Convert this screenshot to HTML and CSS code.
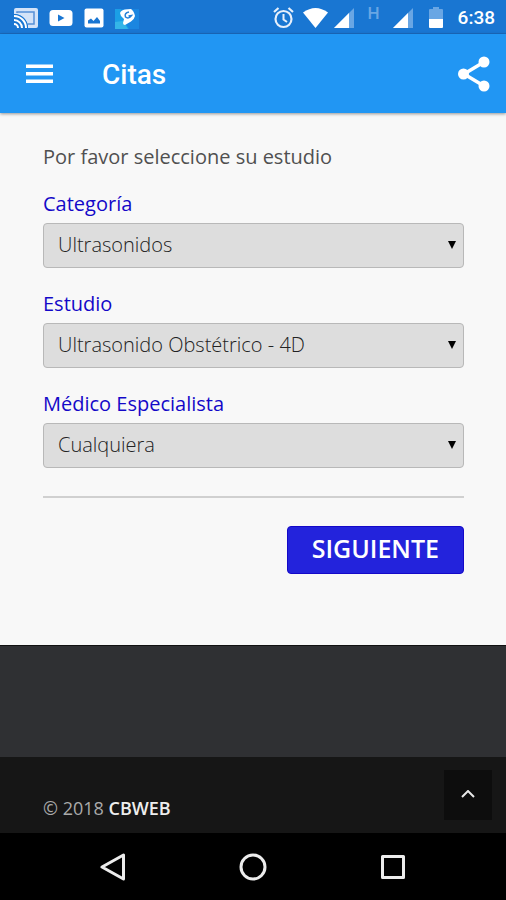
FILE: index.html
```html
<!DOCTYPE html>
<html lang="es">
<head>
<meta charset="utf-8">
<meta name="viewport" content="width=device-width, initial-scale=1">
<title>Citas</title>
<link rel="stylesheet" href="styles.css">
</head>
<body>
<div class="status">
  <div class="status-left">
    <svg width="24" height="20" viewBox="0 0 24 20" aria-hidden="true">
      <path d="M2 0h20q2 0 2 2v16q0 2-2 2h-8A14 14 0 0 0 0 6V2Q0 0 2 0z" fill="#d3e3f8"/>
      <path d="M3 5V4h17v12h-6" fill="none" stroke="#5590d6" stroke-width="1.5"/>
      <path d="M0 8a12 12 0 0 1 12 12M0 12a8 8 0 0 1 8 8" fill="none" stroke="#1976d2" stroke-width="4"/>
      <path d="M0 8a12 12 0 0 1 12 12M0 12a8 8 0 0 1 8 8M0 16a4 4 0 0 1 4 4" fill="none" stroke="#fff" stroke-width="2"/>
    </svg>
    <svg width="24" height="18" viewBox="0 0 24 18" aria-hidden="true">
      <rect x="0.500" y="1" width="23" height="16" rx="3.500" fill="#fff"/>
      <path d="M9 5.500l6.500 3.500-6.500 3.500z" fill="#1976d2"/>
    </svg>
    <svg width="20" height="20" viewBox="0 0 20 20" aria-hidden="true">
      <rect x="0.500" y="0.500" width="19" height="19" rx="2" fill="#fff"/>
      <path d="M4 15.500v-3l3-2 2.500 2.500 3.500-4 3 4v2.500z" fill="#1976d2"/>
    </svg>
    <svg width="24" height="22" viewBox="0 0 24 22" aria-hidden="true">
      <path d="M0 2h24v20H0z" fill="#1b86e0"/>
      <path d="M0 2h6l3 12 5 8H0z" fill="#1b9fe6"/>
      <path d="M0 15l8-1 5 8H0z" fill="#34b5e8"/>
      <path d="M5 6q1-3 5-3.500l6-.500q3 2 4 7-1 4-4 5.500L10 18q-2 0-2-2l1-4-3-3z" fill="#fff"/>
      <path d="M14 5q-5 1-3.500 5 3 2.500 6-1.500l-3 .500" fill="none" stroke="#2580d8" stroke-width="1.500"/>
    </svg>
  </div>
  <div class="status-right">
    <svg class="alarm" width="21" height="22" viewBox="0 0 21 22" fill="none" stroke="#e6effb" aria-hidden="true">
      <circle cx="10.500" cy="12" r="8" stroke-width="2.200"/>
      <path d="M10.500 7v5.500l3.500 2.500" stroke-width="2"/>
      <path d="M1 5l4.500-4M20 5l-4.500-4" stroke-width="2.200"/>
    </svg>
    <svg class="wifi" width="25" height="20" viewBox="0 0 25 20" aria-hidden="true">
      <path d="M0 4.500Q12.500-4.500 25 4.500L12.500 20z" fill="#fff"/>
    </svg>
    <svg class="signal" width="20" height="20" viewBox="0 0 20 20" aria-hidden="true">
      <path d="M20 0v20H0z" fill="#69a6e4"/><path d="M15 5v15H0z" fill="#fff"/>
    </svg>
    <span class="network">H</span>
    <svg class="signal" width="20" height="20" viewBox="0 0 20 20" aria-hidden="true">
      <path d="M20 0v20H0z" fill="#69a6e4"/><path d="M15 5v15H0z" fill="#fff"/>
    </svg>
    <svg class="battery" width="14" height="21" viewBox="0 0 14 21" aria-hidden="true">
      <path d="M4 0h6v2h3q1 0 1 1v10H0V3q0-1 1-1h3z" fill="#69a6e4"/>
      <path d="M0 12h14v8q0 1-1 1H1q-1 0-1-1z" fill="#fff"/>
    </svg>
    <time>6:38</time>
  </div>
</div>

<header class="appbar">
  <button class="icon-button" type="button" aria-label="Menú">
    <svg width="27" height="20" viewBox="0 0 27 20" fill="#fff" aria-hidden="true">
      <path d="M0 0.500h27v3.500H0zM0 8h27v3.500H0zM0 15.500h27V19H0z"/>
    </svg>
  </button>
  <h1>Citas</h1>
  <button class="icon-button" type="button" aria-label="Compartir">
    <svg width="32" height="36" viewBox="0 0 32 36" aria-hidden="true">
      <path d="M26 6L6 18l20 12" fill="none" stroke="#fff" stroke-width="3.500"/>
      <g fill="#fff"><circle cx="26" cy="6" r="5.500"/><circle cx="5.500" cy="18" r="5.500"/><circle cx="26" cy="30" r="5.500"/></g>
    </svg>
  </button>
</header>

<main>
  <form>
    <p class="intro">Por favor seleccione su estudio</p>
    <div class="fields">
      <div class="field">
        <label for="categoria">Categoría</label>
        <div class="select-box">
          <select id="categoria"><option>Ultrasonidos</option></select>
          <svg class="arrow" width="8" height="8" viewBox="0 0 8 8" aria-hidden="true"><path d="M0 0h8L4 8z"/></svg>
        </div>
      </div>
      <div class="field">
        <label for="estudio">Estudio</label>
        <div class="select-box">
          <select id="estudio"><option>Ultrasonido Obstétrico - 4D</option></select>
          <svg class="arrow" width="8" height="8" viewBox="0 0 8 8" aria-hidden="true"><path d="M0 0h8L4 8z"/></svg>
        </div>
      </div>
      <div class="field">
        <label for="medico">Médico Especialista</label>
        <div class="select-box">
          <select id="medico"><option>Cualquiera</option></select>
          <svg class="arrow" width="8" height="8" viewBox="0 0 8 8" aria-hidden="true"><path d="M0 0h8L4 8z"/></svg>
        </div>
      </div>
    </div>
    <hr>
    <div class="actions"><button class="next" type="button">SIGUIENTE</button></div>
  </form>
</main>

<div class="band"></div>

<footer>
  <p>© 2018 <a href="#">CBWEB</a></p>
  <button class="to-top" type="button" aria-label="Subir">
    <svg width="14" height="8" viewBox="0 0 14 8" fill="none" stroke="#e8e8e8" stroke-width="2" aria-hidden="true"><path d="M1 7l6-6 6 6"/></svg>
  </button>
</footer>

<nav class="system" aria-label="Sistema">
  <button type="button" aria-label="Atrás">
    <svg width="28" height="28" viewBox="0 0 28 28" fill="none" stroke="#ececec" stroke-width="3" stroke-linejoin="round" aria-hidden="true"><path d="M24.500 2v24L3 14z"/></svg>
  </button>
  <button type="button" aria-label="Inicio">
    <svg width="28" height="28" viewBox="0 0 28 28" fill="none" stroke="#ececec" stroke-width="3" aria-hidden="true"><circle cx="14" cy="14" r="12"/></svg>
  </button>
  <button type="button" aria-label="Recientes">
    <svg width="28" height="28" viewBox="0 0 28 28" fill="none" stroke="#ececec" stroke-width="3" stroke-linejoin="round" aria-hidden="true"><rect x="3.500" y="3.500" width="21" height="21"/></svg>
  </button>
</nav>
</body>
</html>
```
FILE: styles.css
```css
* {
  box-sizing: border-box;
}

body {
  margin: 0;
  min-height: 100vh;
  display: flex;
  flex-direction: column;
  background: #000;
  font-family: "Open Sans", sans-serif;
}

button {
  border: 0;
  padding: 0;
  background: none;
  cursor: pointer;
}

svg {
  display: block;
  flex: none;
}

p {
  margin: 0;
}

.status {
  display: flex;
  justify-content: space-between;
  height: 34px;
  padding: 2px 11px 0 14px;
  background: #1976d2;
  border-bottom: 1px solid #1a6bbf;
}

.status-left,
.status-right {
  display: flex;
  align-items: center;
}

.status-left {
  gap: 11px;
}

.status-right {
  color: #fff;
  font-family: Roboto, sans-serif;
}

.alarm {
  margin-right: 9px;
}

.wifi {
  margin-right: 6px;
}

.network {
  align-self: flex-start;
  margin: 1px 13px 0 14px;
  color: #69a6e4;
  font-size: 17px;
  font-weight: 500;
  line-height: 20px;
}

.battery {
  margin: 0 15px 0 16px;
}

time {
  font-size: 19px;
  font-weight: 500;
  line-height: 24px;
}

.appbar {
  position: relative;
  display: flex;
  align-items: center;
  height: 79px;
  padding: 0 16px 0 26px;
  background: #2196f3;
  box-shadow: 0 1px 3px rgba(0, 0, 0, 0.4);
}

h1 {
  flex: 1;
  margin: 0 0 0 49px;
  padding-top: 2px;
  color: #fff;
  font-family: Roboto, sans-serif;
  font-size: 28px;
  font-weight: 500;
  line-height: 36px;
}

main {
  padding: 28px 42px 71px 43px;
  background: #f8f8f8;
}

.intro {
  color: #505050;
  font-size: 20px;
  line-height: 32px;
}

.fields {
  display: grid;
  gap: 22px;
  margin-top: 17px;
}

.field {
  display: grid;
  gap: 5px;
}

label {
  color: #1408c8;
  font-size: 20px;
  line-height: 28px;
}

.select-box {
  position: relative;
}

select {
  display: block;
  width: 100%;
  height: 45px;
  padding: 0 32px 2px 14px;
  appearance: none;
  border: 1px solid #b8b8b8;
  border-radius: 4px;
  background: #ddd;
  color: #222;
  font-family: inherit;
  font-size: 20px;
  font-weight: 300;
}

.arrow {
  position: absolute;
  top: 18px;
  right: 8px;
  pointer-events: none;
}

hr {
  height: 2px;
  margin: 28px 0;
  border: 0;
  background: #d0d0d0;
}

.actions {
  display: flex;
  justify-content: flex-end;
}

.next {
  height: 48px;
  padding: 0 24px 5px;
  border: 1px solid #1408c8;
  border-radius: 4px;
  background: #2323dc;
  color: #fff;
  font-family: inherit;
  font-size: 25px;
  font-weight: 600;
}

.band {
  flex: 1;
  min-height: 64px;
  border-top: 1px solid #111;
  background: #2f3033;
}

footer {
  display: flex;
  align-items: center;
  justify-content: space-between;
  height: 76px;
  padding: 0 14px 0 43px;
  background: #161616;
}

footer p {
  padding-top: 26px;
  color: #aaa;
  font-size: 18px;
  line-height: 24px;
}

footer a {
  color: #eee;
  font-weight: 600;
  text-decoration: none;
}

.to-top {
  display: grid;
  place-items: center;
  width: 48px;
  height: 50px;
  padding-bottom: 3px;
  background: #0d0d0d;
}

.system {
  display: flex;
  justify-content: center;
  align-items: center;
  gap: 112px;
  height: 67px;
  background: #000;
}
```
